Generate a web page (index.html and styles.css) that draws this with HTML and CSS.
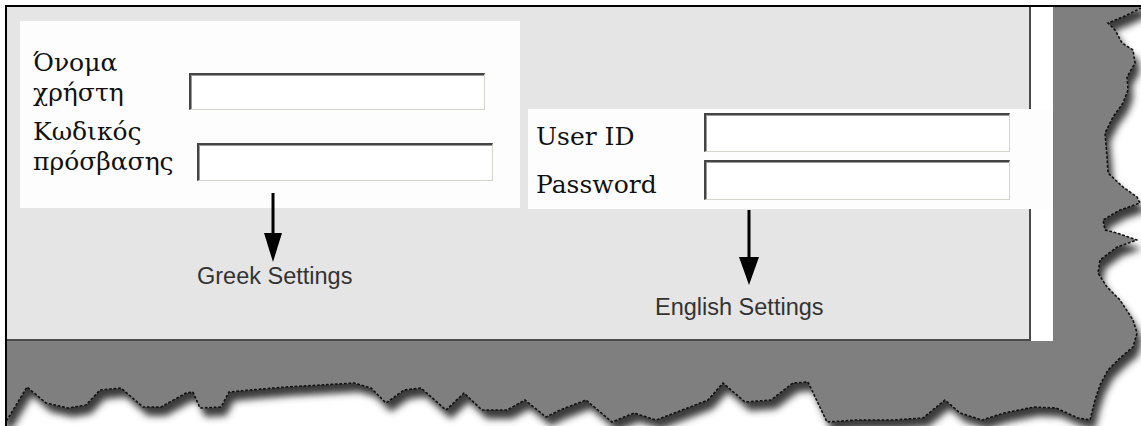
FILE: index.html
```html
<!DOCTYPE html>
<html lang="el">
<head>
    <meta charset="UTF-8">
    <meta name="viewport" content="width=device-width, initial-scale=1.0">
    <title>Login Settings</title>
    <link rel="stylesheet" href="styles.css">
</head>
<body>
    <div class="sheet">
        <div class="window">
            <div class="panel">
                <div class="column greek-col">
                    <div class="box greek-box">
                        <div class="row row-name">
                            <label class="label name-label" for="greekUser">Όνομα<br>χρήστη</label>
                            <input type="text" id="greekUser" class="field name-field">
                        </div>
                        <div class="row row-pass">
                            <label class="label pass-label" for="greekPass">Κωδικός<br>πρόσβασης</label>
                            <input type="password" id="greekPass" class="field pass-field">
                        </div>
                    </div>
                    <svg class="arrow greek-arrow" width="20" height="69" viewBox="0 0 20 69">
                        <line x1="10" y1="0" x2="10" y2="42" stroke="#000" stroke-width="3"/>
                        <polygon points="1,40 19,40 10,69" fill="#000"/>
                    </svg>
                    <div class="caption greek-caption">Greek Settings</div>
                </div>
                <div class="column english-col">
                    <div class="box english-box">
                        <div class="row">
                            <label class="label en-label" for="userId">User ID</label>
                            <input type="text" id="userId" class="field en-field">
                        </div>
                        <div class="row row-en-pass">
                            <label class="label en-label" for="userPass">Password</label>
                            <input type="password" id="userPass" class="field en-field en-pass">
                        </div>
                    </div>
                    <svg class="arrow english-arrow" width="20" height="75" viewBox="0 0 20 75">
                        <line x1="10" y1="0" x2="10" y2="49" stroke="#000" stroke-width="3"/>
                        <polygon points="0,47 20,47 10,75" fill="#000"/>
                    </svg>
                    <div class="caption english-caption">English Settings</div>
                </div>
            </div>
        </div>
    </div>

    <!-- torn paper edge drawn over the grey backdrop -->
    <svg class="tear" width="1141" height="426" viewBox="0 0 1141 426">
        <defs>
            <clipPath id="tornAway">
                <path d="M1141,8 L1125,16 1108,23 1115,30 1122,43 1133,50 1135,63 1127,77 1128,90 1123,103 1113,117 1105,133 1107,157 1108,173 1123,187 1137,197 1140,203 1120,210 1103,220 1105,230 1117,233 1137,240 1117,247 1100,260 1098,273 1107,287 1120,300 1133,320 1137,333 1133,347 1120,358 1108,370 1100,385 1095,400 1090,420 1078,418 1056,408 1034,407 1004,413 982,420 960,413 945,400 923,418 893,420 856,420 827,422 808,382 793,383 771,400 745,402 723,383 708,400 690,407 656,420 634,413 612,422 586,400 560,410 546,417 525,400 507,410 482,410 464,393 446,410 421,388 404,390 386,403 371,388 354,383 321,385 286,387 250,390 229,392 221,407 200,408 193,392 186,393 161,407 143,407 121,388 100,390 86,405 68,408 46,403 27,387 7,420 7,426 1141,426 Z"/>
            </clipPath>
            <filter id="soft" x="-5%" y="-5%" width="110%" height="110%">
                <feGaussianBlur stdDeviation="3.5"/>
            </filter>
        </defs>
        <path fill="#fff" d="M1141,8 L1125,16 1108,23 1115,30 1122,43 1133,50 1135,63 1127,77 1128,90 1123,103 1113,117 1105,133 1107,157 1108,173 1123,187 1137,197 1140,203 1120,210 1103,220 1105,230 1117,233 1137,240 1117,247 1100,260 1098,273 1107,287 1120,300 1133,320 1137,333 1133,347 1120,358 1108,370 1100,385 1095,400 1090,420 1078,418 1056,408 1034,407 1004,413 982,420 960,413 945,400 923,418 893,420 856,420 827,422 808,382 793,383 771,400 745,402 723,383 708,400 690,407 656,420 634,413 612,422 586,400 560,410 546,417 525,400 507,410 482,410 464,393 446,410 421,388 404,390 386,403 371,388 354,383 321,385 286,387 250,390 229,392 221,407 200,408 193,392 186,393 161,407 143,407 121,388 100,390 86,405 68,408 46,403 27,387 7,420 7,426 1141,426 Z"/>
        <g clip-path="url(#tornAway)">
            <path fill="#3a3a3a" filter="url(#soft)" transform="translate(5,9)" d="M0,0 L1141,0 1141,8 1125,16 1108,23 1115,30 1122,43 1133,50 1135,63 1127,77 1128,90 1123,103 1113,117 1105,133 1107,157 1108,173 1123,187 1137,197 1140,203 1120,210 1103,220 1105,230 1117,233 1137,240 1117,247 1100,260 1098,273 1107,287 1120,300 1133,320 1137,333 1133,347 1120,358 1108,370 1100,385 1095,400 1090,420 1078,418 1056,408 1034,407 1004,413 982,420 960,413 945,400 923,418 893,420 856,420 827,422 808,382 793,383 771,400 745,402 723,383 708,400 690,407 656,420 634,413 612,422 586,400 560,410 546,417 525,400 507,410 482,410 464,393 446,410 421,388 404,390 386,403 371,388 354,383 321,385 286,387 250,390 229,392 221,407 200,408 193,392 186,393 161,407 143,407 121,388 100,390 86,405 68,408 46,403 27,387 7,420 0,420 Z"/>
        </g>
        <polyline class="tear-edge" points="1141,8 1125,16 1108,23 1115,30 1122,43 1133,50 1135,63 1127,77 1128,90 1123,103 1113,117 1105,133 1107,157 1108,173 1123,187 1137,197 1140,203 1120,210 1103,220 1105,230 1117,233 1137,240 1117,247 1100,260 1098,273 1107,287 1120,300 1133,320 1137,333 1133,347 1120,358 1108,370 1100,385 1095,400 1090,420 1078,418 1056,408 1034,407 1004,413 982,420 960,413 945,400 923,418 893,420 856,420 827,422 808,382 793,383 771,400 745,402 723,383 708,400 690,407 656,420 634,413 612,422 586,400 560,410 546,417 525,400 507,410 482,410 464,393 446,410 421,388 404,390 386,403 371,388 354,383 321,385 286,387 250,390 229,392 221,407 200,408 193,392 186,393 161,407 143,407 121,388 100,390 86,405 68,408 46,403 27,387 7,420"/>
    </svg>
</body>
</html>
```

FILE: styles.css
```css
html, body {
    margin: 0;
    padding: 0;
    background-color: white;
}
body {
    position: relative;
    width: 1141px;
    height: 426px;
    overflow: hidden;
}
.sheet {
    margin: 5px 0 0 5px;
    height: 419px;
    border-top: 2px solid #000;
    border-left: 2px solid #000;
    background-color: #7f7f7f;
}
.window {
    width: 1046px;
    height: 334px;
    background-color: #fff;
}
.panel {
    box-sizing: border-box;
    width: 1024px;
    height: 334px;
    padding: 14px 0 0 13px;
    display: flex;
    gap: 8px;
    background-color: #e5e5e5;
    border-right: 2px solid #4a4a4a;
    border-bottom: 2px solid #4a4a4a;
}
.column {
    display: flex;
    flex-direction: column;
    flex-shrink: 0;
}
.greek-col {
    width: 500px;
}
.english-col {
    width: 525px;
    margin-top: 88px;
}
.box {
    box-sizing: border-box;
    background-color: #fdfdfd;
}
.greek-box {
    height: 187px;
    padding: 27px 0 0 13px;
}
.english-box {
    height: 100px;
    padding: 4px 0 0 8px;
}
.row {
    display: flex;
    align-items: flex-start;
}
.row-pass {
    margin-top: 7px;
}
.english-box .row {
    align-items: flex-end;
}
.row-en-pass {
    margin-top: 8px;
}
.label {
    font-family: "DejaVu Serif", serif;
    font-size: 25px;
    line-height: 30px;
    color: #111;
}
.name-label {
    width: 156px;
}
.pass-label {
    width: 164px;
}
.en-label {
    width: 168px;
}
.field {
    box-sizing: border-box;
    margin: 0;
    padding: 0;
    background-color: #fff;
    border-top: 2px solid #444;
    border-left: 2px solid #444;
    border-right: 1px solid #d6d3cc;
    border-bottom: 1px solid #d6d3cc;
    box-shadow: inset 1px 1px 0 #9a9a9a;
    outline: none;
}
.name-field {
    width: 296px;
    height: 37px;
    margin-top: 25px;
}
.pass-field {
    width: 296px;
    height: 38px;
    margin-top: 26px;
}
.en-field {
    width: 306px;
    height: 39px;
}
.en-pass {
    height: 40px;
}
.arrow {
    display: block;
}
.greek-arrow {
    margin: -15px 0 0 243px;
}
.english-arrow {
    margin: 1px 0 0 211px;
}
.caption {
    font-family: "Liberation Sans", Arial, sans-serif;
    font-size: 23.5px;
    line-height: 26px;
    color: #333;
    white-space: nowrap;
}
.greek-caption {
    margin: 1px 0 0 177px;
}
.english-caption {
    margin: 9px 0 0 127px;
}
.tear {
    position: absolute;
    top: 0;
    left: 0;
}
.tear-edge {
    fill: none;
    stroke: #111;
    stroke-width: 1.6;
    stroke-dasharray: 1.5 3;
    stroke-linecap: round;
}
```
